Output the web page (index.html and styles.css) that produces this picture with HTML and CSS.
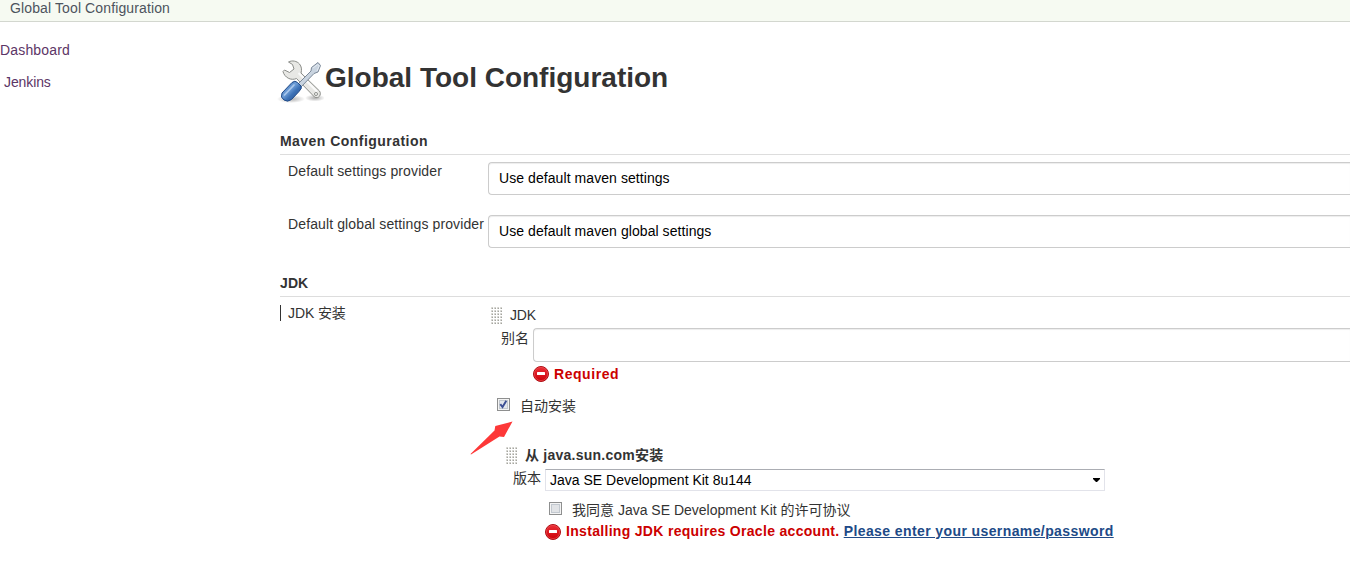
FILE: index.html
```html
<!DOCTYPE html>
<html lang="zh-CN">
<head>
<meta charset="utf-8">
<title>Global Tool Configuration</title>
<link rel="stylesheet" href="styles.css">
</head>
<body>
<svg class="defs" width="0" height="0" aria-hidden="true">
  <defs>
    <linearGradient id="red" x1="0" y1="0" x2="0" y2="1"><stop offset="0" stop-color="#ec3038"/><stop offset="1" stop-color="#cc0008"/></linearGradient>
    <linearGradient id="blue" x1="0" y1="0" x2="1" y2="1"><stop offset="0" stop-color="#2c61a8"/><stop offset=".42" stop-color="#6f9fd8"/><stop offset=".6" stop-color="#3b70b5"/><stop offset="1" stop-color="#204a87"/></linearGradient>
    <radialGradient id="shade"><stop offset="0" stop-color="#000" stop-opacity=".32"/><stop offset="1" stop-color="#000" stop-opacity="0"/></radialGradient>
    <pattern id="dots" width="3" height="3" patternUnits="userSpaceOnUse"><rect width="2" height="2" fill="#d0d0cc"/><rect x="1" y="1" width="1" height="1" fill="#a4a49e"/><rect width="1" height="1" fill="#deded9"/></pattern>
    <symbol id="error" viewBox="0 0 16 16"><circle cx="8" cy="8" r="7.5" fill="url(#red)" stroke="#ae1015"/><circle cx="8" cy="8" r="6.6" fill="none" stroke="#ef5055" stroke-width=".6"/><rect x="4" y="6" width="8" height="3" rx=".5" fill="#fff"/></symbol>
    <symbol id="grip" viewBox="0 0 12 18"><rect width="12" height="17" fill="url(#dots)"/></symbol>
  </defs>
</svg>
<header class="breadcrumb">Global Tool Configuration</header>
<div class="page">
  <nav class="side">
    <a class="side-link">Dashboard</a>
    <a class="side-link indented">Jenkins</a>
  </nav>
  <main class="main">
    <div class="title">
      <svg class="title-icon" width="48" height="48" viewBox="0 0 48 48">
        <ellipse cx="15" cy="43" rx="14" ry="4" fill="url(#shade)"/>
        <ellipse cx="39" cy="42" rx="10" ry="3.5" fill="url(#shade)"/>
        <path d="M12.500 6C16 4 21 5 23.500 8C25.500 10.500 26 13.500 25 17L43.500 35C46 38.500 42.500 43.500 38.500 41L20.500 22.500C15 25 8.500 21.500 7 15.500L8.500 14L13.500 16.500L18 13L16.500 8.500Z" fill="#e8e8e5" stroke="#8b8d89" stroke-linejoin="round"/>
        <path d="M22.500 17L41 35.500" stroke="#fafafa" stroke-width="2" fill="none"/>
        <circle cx="40" cy="38" r="1.500" fill="#fff" stroke="#8b8d89"/>
        <path d="M21.500 28.500L35 15L35.500 11.500L42 6.500L44.500 9.500L42 16L38 17.500L24.500 31.500Z" fill="#c9d4e0" stroke="#7b8898" stroke-linejoin="round"/>
        <path d="M37 12L41.700 8.500L43.200 10L41 15" fill="none" stroke="#e5ebf2"/>
        <path d="M16 26.500Q19 24 21.500 26.500L25 30Q26.500 32 23 35.500L15.500 43.500Q11.500 46.500 8 44Q4 41.500 6 37Z" fill="url(#blue)" stroke="#204a87"/>
        <path d="M8.500 39L18 29" stroke="#a9c7eb" stroke-width="1.700" stroke-linecap="round"/>
      </svg>
      <h1 class="heading">Global Tool Configuration</h1>
    </div>

    <h2 class="section maven">Maven Configuration</h2>
    <div class="row"><label class="label">Default settings provider</label><div class="control">Use default maven settings</div></div>
    <div class="row"><label class="label">Default global settings provider</label><div class="control">Use default maven global settings</div></div>

    <h2 class="section jdk">JDK</h2>
    <div class="jdk-row">
      <div class="jdk-label">JDK 安装</div>
      <div class="jdk-body">
        <div class="grip-row"><svg class="grip" width="12" height="18"><use href="#grip"/></svg><span>JDK</span></div>
        <div class="alias"><label class="alias-label">别名</label><div class="alias-input"></div></div>
        <div class="error required"><svg width="16" height="16"><use href="#error"/></svg><b>Required</b></div>
        <div class="auto">
          <svg class="check" width="13" height="13" viewBox="0 0 13 13"><rect x=".5" y=".5" width="12" height="12" fill="#f4f4f4" stroke="#8e8f8f"/><rect x="2.500" y="2.500" width="8" height="8" fill="#e3e7ec" stroke="#c2c8cf"/><path d="M3.300 6.200L5.500 9L9.300 2.800" fill="none" stroke="#3c4f94" stroke-width="1.900"/></svg>
          <span>自动安装</span>
          <svg class="arrow" width="44" height="34" viewBox="0 0 44 34"><path d="M.5 33L24.500 9.500L25.300 5L42.500 .5L34 16L29.500 15.500L1 33.500Z" fill="#fd3838"/></svg>
        </div>
        <div class="installer-head"><svg class="grip" width="12" height="18"><use href="#grip"/></svg><b>从 java.sun.com安装</b></div>
        <div class="version"><label class="version-label">版本</label><div class="select"><span>Java SE Development Kit 8u144</span><svg width="7" height="4" viewBox="0 0 7 4"><path d="M0 0H7V1L4 4H3L0 1Z"/></svg></div></div>
        <div class="agree">
          <svg class="agree-check" width="13" height="13" viewBox="0 0 13 13"><rect x=".5" y=".5" width="12" height="12" fill="#f4f4f4" stroke="#8e8f8f"/><rect x="2.500" y="2.500" width="8" height="8" fill="#e1e3e6" stroke="#c2c8cf"/></svg>
          <span>我同意 Java SE Development Kit 的许可协议</span>
        </div>
        <div class="error account"><svg width="16" height="16"><use href="#error"/></svg><b>Installing JDK requires Oracle account. <a class="link">Please enter your username/password</a></b></div>
      </div>
    </div>
  </main>
</div>
</body>
</html>
```
FILE: styles.css
```css
* { box-sizing: border-box; }
body {
  margin: 0;
  height: 585px;
  overflow: hidden;
  background: #fff;
  color: #333;
  font: 14px/20px "Liberation Sans", "Noto Sans CJK SC", sans-serif;
}
svg { display: block; flex: none; }
.defs { position: absolute; }
b, .section { font-weight: bold; letter-spacing: .46px; }
.breadcrumb {
  height: 22px;
  padding-left: 10px;
  line-height: 16px;
  letter-spacing: .12px;
  color: #4d545d;
  background: #f6faf2;
  border-bottom: 1px solid #d3d7cf;
}
.page { display: flex; height: 563px; white-space: nowrap; }
.side { flex: 0 0 280px; padding-top: 18px; }
.side-link { display: block; height: 32px; letter-spacing: .17px; color: #5c3566; }
.side-link.indented { padding-left: 4px; letter-spacing: -.1px; }
.main { flex: 1; min-width: 0; padding-top: 34px; }
.title { display: flex; height: 48px; margin-left: -4px; }
.heading { margin: 0 0 0 1px; font-size: 28px; line-height: 43px; }
.section {
  height: 24px;
  margin: 0;
  font-size: 14px;
  border-bottom: 1px solid #ddd;
}
.maven { margin-top: 27px; }
.jdk { margin-top: 11px; letter-spacing: .1px; }
.row { display: flex; height: 53px; padding-top: 7px; }
.row + .row { height: 54px; }
.label { width: 208px; padding-left: 8px; line-height: 18px; letter-spacing: .12px; }
.control {
  flex: 1;
  height: 33px;
  padding: 5px 10px;
  letter-spacing: .07px;
  color: #000;
  border: 1px solid #ccc;
  border-right: 0;
  border-radius: 4px 0 0 4px;
  box-shadow: inset 0 1px 1px rgba(0, 0, 0, .075);
}
.jdk-row { display: flex; padding-top: 8px; }
.jdk-label {
  width: 211px;
  height: 16px;
  padding-left: 7px;
  line-height: 16px;
  letter-spacing: -.1px;
  border-left: 1px solid #333;
}
.jdk-body { flex: 1; min-width: 0; }
.grip-row { display: flex; gap: 7px; height: 23px; letter-spacing: -.2px; }
.grip { margin-top: 2px; }
.alias { display: flex; height: 34px; letter-spacing: 0; }
.alias-label { width: 42px; padding-left: 10px; }
.alias-input {
  flex: 1;
  border: 1px solid #ccc;
  border-right: 0;
  border-radius: 4px 0 0 4px;
  box-shadow: inset 0 1px 1px rgba(0, 0, 0, .075);
}
.error { display: flex; align-items: center; gap: 5px; height: 20px; color: #c00; }
.required { margin: 2px 0 0 42px; }
.required b { letter-spacing: .55px; }
.auto { position: relative; display: flex; gap: 10px; height: 61px; padding: 12px 0 0 6px; }
.check { margin-top: 2px; }
.arrow { position: absolute; left: -21px; top: 37px; }
.installer-head { display: flex; gap: 7px; height: 24px; padding-left: 15px; }
.installer-head b { letter-spacing: .24px; }
.version { display: flex; height: 22px; }
.version-label { width: 54px; padding-left: 22px; line-height: 18px; }
.select {
  display: flex;
  align-items: center;
  justify-content: space-between;
  width: 560px;
  padding: 0 4px;
  color: #000;
  border: 1px solid #e2e3ea;
  border-top-color: #abadb3;
}
.agree { display: flex; align-items: center; gap: 10px; height: 20px; margin: 9px 0 0 58px; }
.agree-check { margin-bottom: 3px; }
.account { margin: 2px 0 0 54px; }
.account b { margin-bottom: 2px; letter-spacing: .31px; }
.link { color: #204a87; letter-spacing: .4px; text-decoration: underline; }
```
